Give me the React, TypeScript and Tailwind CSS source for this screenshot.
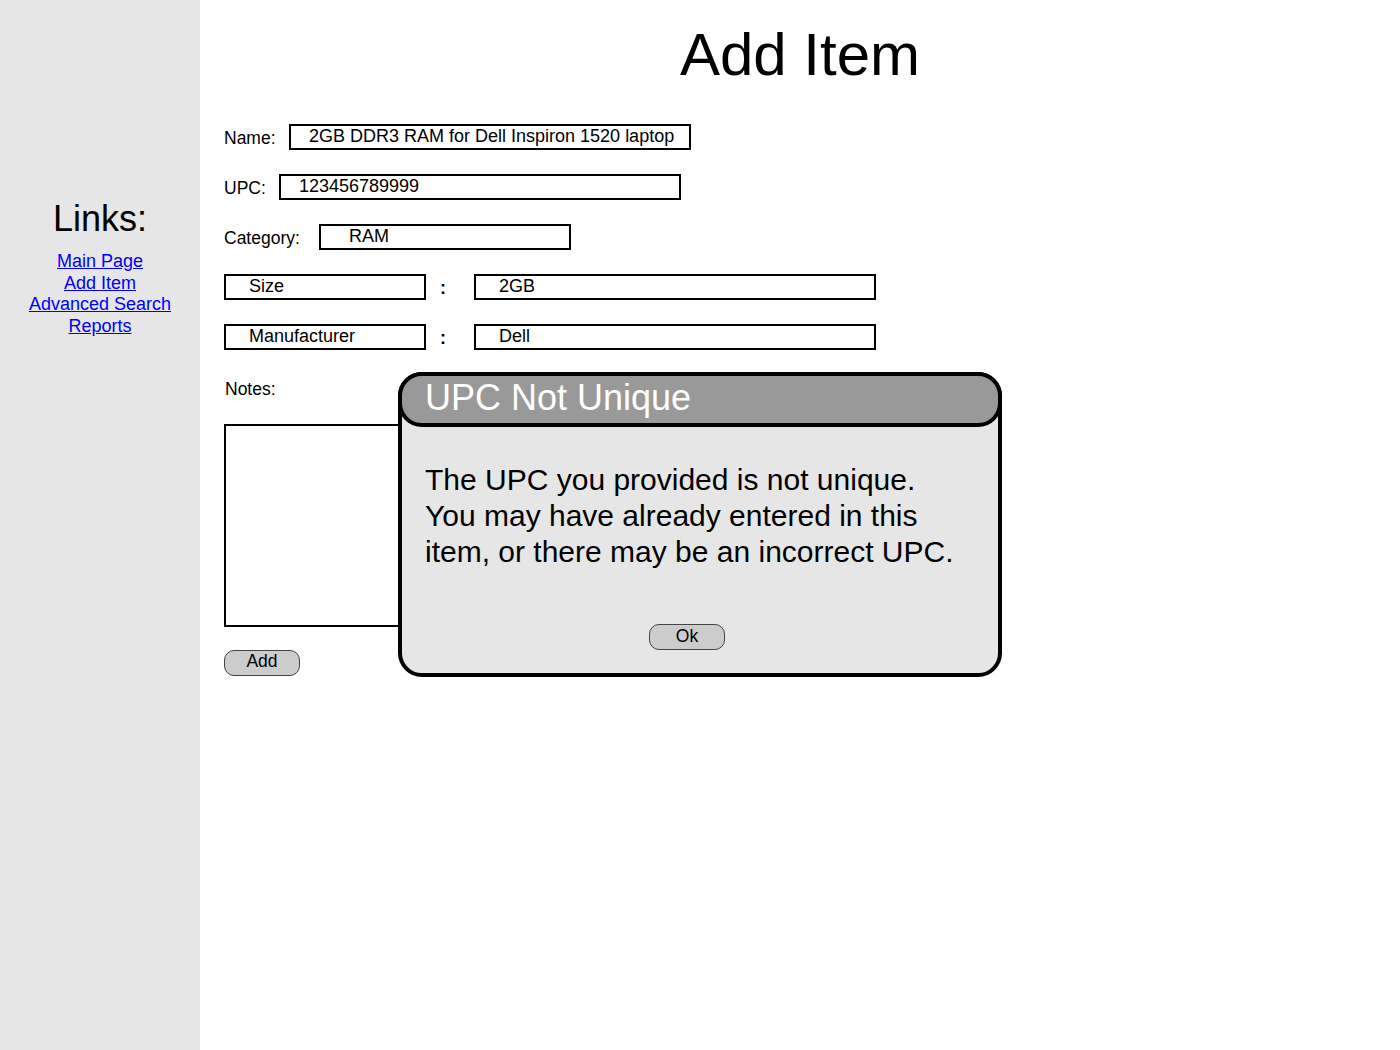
const links = ["Main Page", "Add Item", "Advanced Search", "Reports"];

function Box({ width, pad, children }: { width: string; pad: string; children: string }) {
  return (
    <div className={`${width} h-[26px] border-2 border-black bg-white`}>
      <div className={`${pad} pt-[1px] text-[18px] leading-[18px] whitespace-nowrap`}>{children}</div>
    </div>
  );
}

function FieldRow({ label, labelWidth, boxWidth, pad, value }: { label: string; labelWidth: string; boxWidth: string; pad: string; value: string }) {
  return (
    <div className="flex items-start h-[26px]">
      <span className={`${labelWidth} pt-[5px] text-[17.5px] leading-[18px]`}>{label}</span>
      <Box width={boxWidth} pad={pad}>{value}</Box>
    </div>
  );
}

function PairRow({ name, value }: { name: string; value: string }) {
  return (
    <div className="flex items-start h-[26px]">
      <Box width="w-[202px]" pad="pl-[23px]">{name}</Box>
      <span className="w-[48px] pl-[14px] pt-[5px] text-[18px] leading-[18px] font-bold">:</span>
      <Box width="w-[402px]" pad="pl-[23px]">{value}</Box>
    </div>
  );
}

export default function App() {
  return (
    <div className="relative flex min-h-[1050px] w-full bg-white text-black font-['Liberation_Sans',Arial,sans-serif]">
      <aside className="w-[200px] shrink-0 bg-[#e6e6e6] flex flex-col items-center pt-[198px]">
        <h2 className="text-[36px] leading-[41px]">Links:</h2>
        <nav className="mt-[12px] flex flex-col items-center text-[18px] leading-[21.7px]">
          {links.map((l) => (
            <a key={l} href="#" className="text-[#0000ff] underline">
              {l}
            </a>
          ))}
        </nav>
      </aside>

      <main className="flex-1 flex flex-col">
        <h1 className="pt-[20px] text-center text-[60px] leading-[69px]">Add Item</h1>

        <form className="mt-[35px] pl-[24px] flex flex-col">
          <div className="flex flex-col gap-[24px]">
            <FieldRow label="Name:" labelWidth="w-[65px]" boxWidth="w-[402px]" pad="pl-[18px]" value="2GB DDR3 RAM for Dell Inspiron 1520 laptop" />
            <FieldRow label="UPC:" labelWidth="w-[55px]" boxWidth="w-[402px]" pad="pl-[18px]" value="123456789999" />
            <FieldRow label="Category:" labelWidth="w-[95px]" boxWidth="w-[252px]" pad="pl-[28px]" value="RAM" />
            <PairRow name="Size" value="2GB" />
            <PairRow name="Manufacturer" value="Dell" />
          </div>

          <span className="mt-[31px] pl-[1px] text-[17.5px] leading-[17px]">Notes:</span>
          <div className="mt-[26px] w-[500px] h-[203px] border-2 border-black bg-white" />

          <div className="mt-[23px]">
            <button type="button" className="w-[76px] h-[26px] pb-[3px] rounded-[10px] border border-[#444] bg-[#cccccc] text-[17.5px] leading-[17px] flex items-center justify-center">
              Add
            </button>
          </div>
        </form>
      </main>

      {/* modal dialog over the form */}
      <div className="absolute left-[398px] top-[372px] w-[604px] h-[305px] flex flex-col border-4 border-black rounded-[24px] bg-[#e6e6e6]">
        <div className="-mx-[4px] -mt-[4px] h-[55px] border-4 border-black rounded-[24px] bg-[#999999] pl-[23px] pt-[4px]">
          <span className="text-white text-[36px] leading-[36px]">UPC Not Unique</span>
        </div>
        <p className="mt-[35px] pl-[23px] text-[30px] leading-[36px]">
          The UPC you provided is not unique.
          <br />
          You may have already entered in this
          <br />
          item, or there may be an incorrect UPC.
        </p>
        <div className="mt-[54px] pl-[247px]">
          <button type="button" className="w-[76px] h-[26px] pb-[2px] rounded-[10px] border border-[#444] bg-[#cccccc] text-[17.5px] leading-[17px] flex items-center justify-center">
            Ok
          </button>
        </div>
      </div>
    </div>
  );
}
